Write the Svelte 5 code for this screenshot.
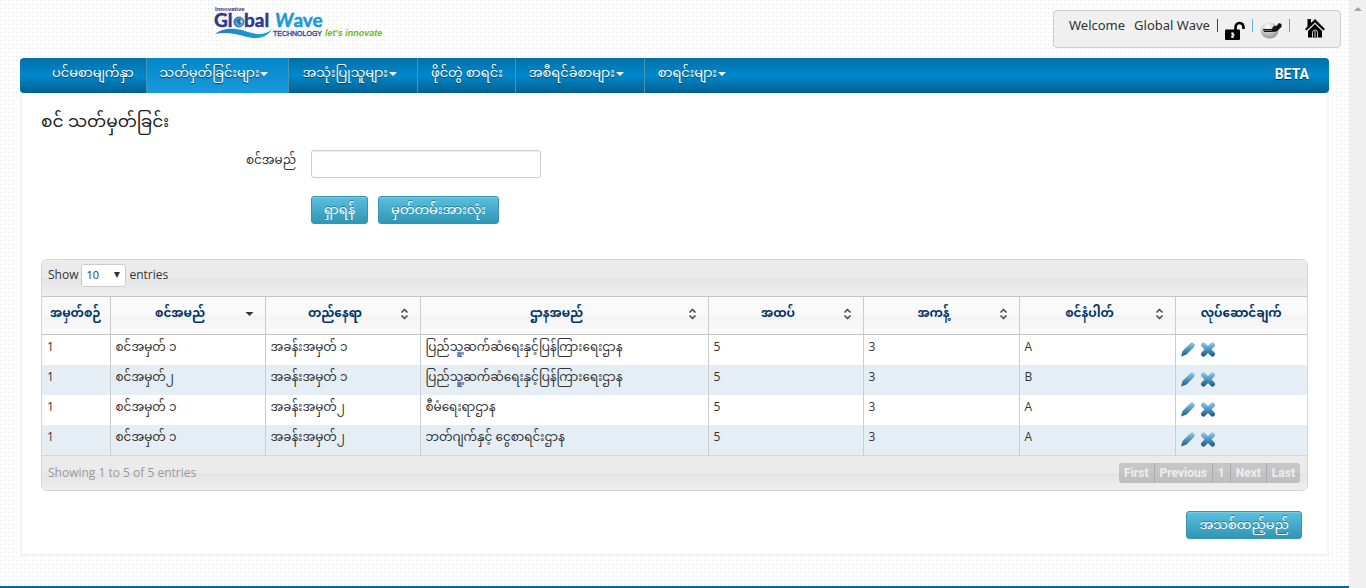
<script>
  const menu = [
    { label: 'ပင်မစာမျက်နှာ', drop: false },
    { label: 'သတ်မှတ်ခြင်းများ', drop: true, active: true },
    { label: 'အသုံးပြုသူများ', drop: true },
    { label: 'ဖိုင်တွဲ စာရင်း', drop: false },
    { label: 'အစီရင်ခံစာများ', drop: true },
    { label: 'စာရင်းများ', drop: true }
  ];
  const columns = [
    { label: 'အမှတ်စဉ်', sort: '' },
    { label: 'စင်အမည်', sort: 'desc' },
    { label: 'တည်နေရာ', sort: 'both' },
    { label: 'ဌာနအမည်', sort: 'both' },
    { label: 'အထပ်', sort: 'both' },
    { label: 'အကန့်', sort: 'both' },
    { label: 'စင်နံပါတ်', sort: 'both' },
    { label: 'လုပ်ဆောင်ချက်', sort: '' }
  ];
  const rows = [
    ['1', 'စင်အမှတ် ၁', 'အခန်းအမှတ် ၁', 'ပြည်သူ့ဆက်ဆံရေးနှင့်ပြန်ကြားရေးဌာန', '5', '3', 'A'],
    ['1', 'စင်အမှတ်၂', 'အခန်းအမှတ် ၁', 'ပြည်သူ့ဆက်ဆံရေးနှင့်ပြန်ကြားရေးဌာန', '5', '3', 'B'],
    ['1', 'စင်အမှတ် ၁', 'အခန်းအမှတ်၂', 'စီမံရေးရာဌာန', '5', '3', 'A'],
    ['1', 'စင်အမှတ် ၁', 'အခန်းအမှတ်၂', 'ဘတ်ဂျက်နှင့် ငွေစာရင်းဌာန', '5', '3', 'A']
  ];
  const pages = ['First', 'Previous', '1', 'Next', 'Last'];
  let query = $state('');
  let size = $state('10');
</script>

<div class="shell">
  <div class="page">
    <header>
      <a class="logo" href="#home" aria-label="Global Wave Technology">
        <svg width="172" height="36" viewBox="0 0 172 36">
          <defs>
            <linearGradient id="wave" x1="0" x2="1">
              <stop offset="0" stop-color="#1c7fc4" />
              <stop offset="1" stop-color="#19a5de" />
            </linearGradient>
            <radialGradient id="globe" cx="0.6" cy="0.5" r="0.6">
              <stop offset="0" stop-color="#d9edf8" />
              <stop offset="1" stop-color="#2173b5" />
            </radialGradient>
          </defs>
          <g font-family="Lato, 'Open Sans', sans-serif" font-weight="700">
            <text x="1" y="5" font-size="6" font-family="'Liberation Sans', sans-serif" fill="#2e3192">Innovative</text>
            <text x="0" y="21" font-size="19" fill="#2b3990" stroke="#2b3990" stroke-width="0.500">Gl</text>
            <text x="30" y="21" font-size="19" fill="#2b3990" stroke="#2b3990" stroke-width="0.500">bal</text>
            <text x="61" y="21" font-size="19" fill="#1c9ad6" stroke="#1c9ad6" stroke-width="0.500"><tspan font-style="italic">W</tspan>ave</text>
            <text x="59" y="30" font-size="7" font-weight="400" font-family="'Liberation Sans', sans-serif" fill="#2b3990" stroke="#2b3990" stroke-width="0.300">TECHNOLOGY</text>
          </g>
          <text x="111" y="30" font-size="9" font-weight="700" font-style="italic" font-family="'Liberation Sans', sans-serif" fill="#6cb918">let's innovate</text>
          <circle cx="25" cy="16" r="5" fill="url(#globe)" stroke="#1d6fae" />
          <path d="M22 15q2-3 5-2l-1 3 2 2-3 1z" fill="#2a6eaa" />
          <path d="M1 28C10 21 22 22 34 26c10 3 18 3 24-3-4 8-14 11-25 8C20 27 10 26 1 28z" fill="url(#wave)" />
        </svg>
      </a>
      <div class="user">
        <span class="hello"><span>Welcome</span><span>Global Wave</span></span>
        <i class="sep plum"></i>
        <a href="#logout" aria-label="Log out">
          <svg width="20" height="20" viewBox="0 0 20 20">
            <rect x="0" y="8.500" width="15" height="10.500" rx="1" />
            <path d="M10.500 9V7q0-5 4-5t4 5v1" fill="none" stroke="#000" stroke-width="2.600" />
            <path d="M6.300 11.500h2.400v2h1v1h-1v2.500H6.300v-2.500h1v-1h-1z" fill="#fff" />
          </svg>
        </a>
        <i class="sep sky"></i>
        <a href="#password" aria-label="Change password">
          <svg width="22" height="18" viewBox="0 0 22 18">
            <defs>
              <radialGradient id="disc" cx="0.4" cy="0.25" r="0.75">
                <stop offset="0" stop-color="#fff" />
                <stop offset="1" stop-color="#999" />
              </radialGradient>
            </defs>
            <ellipse cx="9.500" cy="9.500" rx="9" ry="8" fill="url(#disc)" />
            <path d="M3 8h9v3H4z" fill="#111" />
            <path d="M11.500 11l1-4.500 2-2 1.500 1 3-3.500 2.500 1v3l-5 4.500z" fill="#111" />
            <path d="M4.500 9.500h7" stroke="#ccc" stroke-dasharray="1 1" />
          </svg>
        </a>
        <i class="sep blue"></i>
        <a class="home" href="#home" aria-label="Home">
          <svg width="20" height="20" viewBox="0 0 20 20">
            <path d="M2.500 1H6v4L10 1l10 10-1.600 1.600L10 4.400 1.600 12.600 0 11l2.500-2.500z" />
            <path d="M10 6l7 7v6.500H3V13z" />
            <path d="M7.500 19.500v-5a2.500 2.500 0 0 1 5 0v5M10 13v6" fill="none" stroke="#fff" stroke-width="0.800" />
          </svg>
        </a>
      </div>
    </header>

    <nav>
      {#each menu as m}
        <a href="#menu" class:active={m.active} class:drop={m.drop}>{m.label}{#if m.drop}<b class="caret"></b>{/if}</a>
      {/each}
      <strong>BETA</strong>
    </nav>

    <main>
      <h1>စင် သတ်မှတ်ခြင်း</h1>
      <form onsubmit={(e) => e.preventDefault()}>
        <div class="field">
          <label for="shelf">စင်အမည်</label>
          <input id="shelf" type="text" bind:value={query} />
        </div>
        <div class="actions">
          <button class="btn">ရှာရန်</button>
          <button class="btn" type="button">မှတ်တမ်းအားလုံး</button>
        </div>
      </form>

      <section class="grid">
        <div class="bar top">
          <label for="size">Show</label>
          <span class="pick">
            <select id="size" bind:value={size}>
              <option>10</option>
              <option>25</option>
            </select>
          </span>
          <span>entries</span>
        </div>
        <table>
          <colgroup>
            <col class="c-no" /><col class="c-std" /><col class="c-std" /><col />
            <col class="c-std" /><col class="c-wide" /><col class="c-wide" /><col class="c-act" />
          </colgroup>
          <thead>
            <tr>
              {#each columns as c}
                <th>
                  <div class="head">
                    <span>{c.label}</span>
                    {#if c.sort === 'desc'}
                      <svg width="9" height="14" viewBox="0 0 9 14"><path d="M0.500 5h8l-4 4z" fill="#333" /></svg>
                    {:else if c.sort === 'both'}
                      <svg width="9" height="14" viewBox="0 0 9 14"><path d="M1.500 5.500l3-3 3 3M1.500 8.500l3 3 3-3" fill="none" stroke="#444" stroke-width="1.500" /></svg>
                    {/if}
                  </div>
                </th>
              {/each}
            </tr>
          </thead>
          <tbody>
            {#each rows as r}
              <tr>
                {#each r as cell}<td>{cell}</td>{/each}
                <td class="act">
                  <div class="tools">
                    <a href="#edit" aria-label="Edit">
                      <svg width="16" height="16" viewBox="0 0 16 16">
                        <defs>
                          <linearGradient id="ink" gradientUnits="userSpaceOnUse" x1="0" x2="0" y1="1" y2="16">
                            <stop offset="0" stop-color="#a3cce4" />
                            <stop offset="0.450" stop-color="#4f9bc8" />
                            <stop offset="1" stop-color="#1d5478" />
                          </linearGradient>
                        </defs>
                        <path d="M1 15.500L2.500 10 10 2.500l2-1.500 3 2.500-1 2.500-7.500 7.500z" fill="url(#ink)" />
                      </svg>
                    </a>
                    <a href="#delete" aria-label="Delete">
                      <svg width="16" height="16" viewBox="0 0 16 16">
                        <path d="M3.500 4l9 9M12.500 4l-9 9" fill="none" stroke="url(#ink)" stroke-width="5" stroke-linecap="round" />
                      </svg>
                    </a>
                  </div>
                </td>
              </tr>
            {/each}
          </tbody>
        </table>
        <div class="bar bottom">
          <span class="info">Showing 1 to 5 of 5 entries</span>
          <div class="pager">
            {#each pages as p}<button type="button">{p}</button>{/each}
          </div>
        </div>
      </section>

      <div class="add"><button class="btn" type="button">အသစ်ထည့်မည်</button></div>
    </main>
    <footer></footer>
  </div>
  <div class="scroll"><i></i></div>
</div>

<style>
  :global(body) { margin: 0; }
  * { box-sizing: border-box; }
  .shell {
    display: flex;
    min-height: 100vh;
    font: 12px/20px 'Open Sans', 'Noto Sans Myanmar', Padauk, sans-serif;
    color: #333;
  }
  .page {
    flex: 1;
    min-width: 0;
    display: flex;
    flex-direction: column;
    background: #fff conic-gradient(from 0deg at 1px 1px, transparent 75%, #e6e6e6 0) 0 0 / 4px 4px;
  }
  .scroll { width: 17px; background: #f0f0f0; padding-top: 7px; }
  .scroll i { display: block; width: 0; margin: 0 auto; border: 4px solid transparent; border-top: 0; border-bottom: 4px solid #a3a3a3; }
  header { display: flex; justify-content: space-between; align-items: flex-start; height: 58px; padding: 6px 8px 0 214px; }
  .logo svg { display: block; overflow: visible; }
  .user {
    display: flex;
    align-items: flex-start;
    width: 288px;
    height: 38px;
    margin-top: 4px;
    padding: 4px 15px;
    gap: 7px;
    border: 1px solid #ccc;
    border-radius: 4px;
    background: #f0f0f0;
    font: 13px/20px 'Noto Sans', sans-serif;
  }
  .user svg { display: block; margin-top: 6px; }
  .hello { display: flex; gap: 9px; white-space: nowrap; }
  .sep { width: 1px; height: 13px; margin-top: 4px; }
  .plum { background: #802060; }
  .sky { background: #70b0e0; }
  .blue { background: #8090e0; }
  .home { margin-left: auto; }
  .user .home svg { margin-top: 3px; }
  nav {
    display: flex;
    height: 35px;
    margin: 0 20px;
    padding: 0 20px;
    border-radius: 4px;
    background: linear-gradient(#0070a8, #0088cc 50%, #006090);
    color: #fff;
  }
  nav a {
    padding: 4px 12px 0;
    border-right: 1px solid #4a93b5;
    color: #fff;
    font-size: 13px;
    text-decoration: none;
    text-shadow: 0 1px 1px #045;
    white-space: nowrap;
  }
  nav a.drop { padding-right: 20px; }
  nav a + a { padding-left: 13px; }
  nav a:nth-last-of-type(1) { border-right: 0; }
  nav a.active { background: linear-gradient(#0088cc, #1c98dc); }
  .caret { display: inline-block; margin-left: 1px; border: 4px solid transparent; border-top-color: #fff; border-bottom: 0; vertical-align: middle; }
  nav strong { margin-left: auto; padding-top: 6px; font: 700 14px/20px Roboto, sans-serif; text-shadow: 0 1px 1px #034; }
  main { margin: 0 20px; padding: 16px 19px 15px; border: 2px solid #f3f3f3; border-top: 0; background: #fff; }
  h1 { margin: 0; font-size: 17px; line-height: 24px; font-weight: 400; color: #222; }
  form { padding-top: 17px; }
  .field { display: flex; gap: 15px; }
  .field label { width: 255px; text-align: right; }
  .field input { width: 230px; height: 28px; padding: 4px 6px; border: 1px solid #ccc; border-radius: 3px; box-shadow: inset 0 1px 1px #eee; font: inherit; }
  .actions { display: flex; gap: 10px; padding: 18px 0 0 270px; }
  .btn {
    height: 28px;
    padding: 0 12px 2px;
    border: 1px solid #3a93ae;
    border-radius: 3px;
    background: linear-gradient(#5bc0de, #2f96b4);
    box-shadow: inset 0 1px 0 #7cccdf;
    color: #fff;
    font: 13px/20px 'Open Sans', 'Noto Sans Myanmar', Padauk, sans-serif;
    text-shadow: 0 -1px 0 #2a7d96;
  }
  .grid { margin-top: 35px; border: 1px solid #d5d5d5; border-radius: 6px; overflow: hidden; }
  .bar { display: flex; align-items: center; padding: 0 7px 0 6px; background: linear-gradient(#ebebeb 50%, #e4e4e4 50%, #efefef); }
  .top { height: 36px; gap: 3px; padding-bottom: 6px; }
  .pick { position: relative; display: flex; }
  .pick::after { content: ''; position: absolute; right: 6px; top: 8px; border: 3px solid transparent; border-top: 6px solid #333; border-bottom: 0; pointer-events: none; }
  select { width: 45px; height: 23px; padding: 0 4px 2px; border: 1px solid #ccc; border-radius: 3px; background: #fff; color: #333; font: 11px 'Open Sans', sans-serif; appearance: none; }
  table { width: 100%; border-collapse: collapse; table-layout: fixed; }
  .c-no { width: 68px; }
  .c-std { width: 155px; }
  .c-wide { width: 156px; }
  .c-act { width: 132px; }
  th, td { border-right: 1px solid #ccc; padding: 0 5px; }
  th:last-child, td:last-child { border-right: 0; }
  th { height: 38px; border-top: 1px solid #c5c5c5; border-bottom: 1px solid #c5c5c5; background: linear-gradient(#fafafa 50%, #f4f4f4 50%, #fafafa); color: #003366; font-size: 12px; white-space: nowrap; }
  .head { display: flex; align-items: center; padding-right: 6px; }
  .head span { flex: 1; padding-bottom: 6px; }
  .head svg { margin-bottom: 3px; }
  th:first-child .head, th:last-child .head { padding-right: 0; }
  td { height: 30px; padding-bottom: 6px; white-space: nowrap; }
  td.act { padding: 0 4px 2px; }
  tbody tr:nth-child(even) { background: #e4eef4; }
  .tools { display: flex; gap: 4px; }
  .tools svg { display: block; }
  .bottom { height: 35px; justify-content: space-between; border-top: 1px solid #d5d5d5; }
  .info { color: #999; }
  .pager { display: flex; gap: 1px; border-radius: 4px; overflow: hidden; background: #aaa; }
  .pager button { height: 20px; padding: 0 5px; border: 0; background: linear-gradient(#c6c6c6 50%, #c0c0c0 50%); color: #eee; font: 700 12px/20px Roboto, sans-serif; }
  .add { display: flex; justify-content: flex-end; padding: 20px 6px 0; }
  footer { height: 2px; margin-top: auto; background: #0069a0; }
</style>
